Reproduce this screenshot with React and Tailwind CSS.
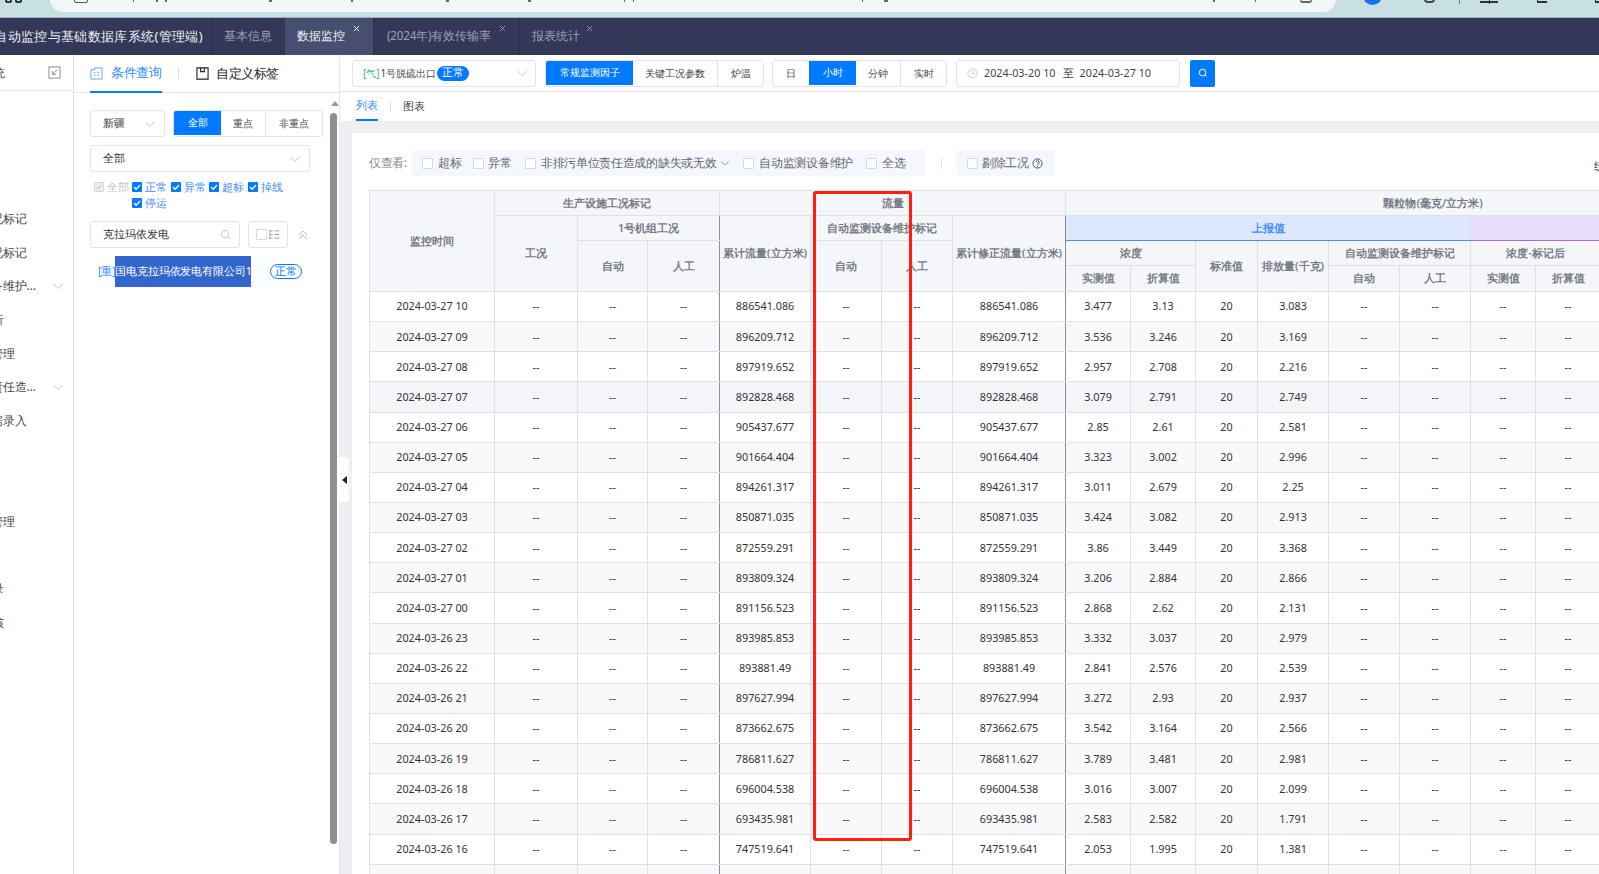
import React from "react";

const FONT = "font-['Liberation_Sans','Noto_Sans_CJK_SC',sans-serif]";

const rows = [
  ["2024-03-27 10","886541.086","3.477","3.13","3.083"],
  ["2024-03-27 09","896209.712","3.536","3.246","3.169"],
  ["2024-03-27 08","897919.652","2.957","2.708","2.216"],
  ["2024-03-27 07","892828.468","3.079","2.791","2.749"],
  ["2024-03-27 06","905437.677","2.85","2.61","2.581"],
  ["2024-03-27 05","901664.404","3.323","3.002","2.996"],
  ["2024-03-27 04","894261.317","3.011","2.679","2.25"],
  ["2024-03-27 03","850871.035","3.424","3.082","2.913"],
  ["2024-03-27 02","872559.291","3.86","3.449","3.368"],
  ["2024-03-27 01","893809.324","3.206","2.884","2.866"],
  ["2024-03-27 00","891156.523","2.868","2.62","2.131"],
  ["2024-03-26 23","893985.853","3.332","3.037","2.979"],
  ["2024-03-26 22","893881.49","2.841","2.576","2.539"],
  ["2024-03-26 21","897627.994","3.272","2.93","2.937"],
  ["2024-03-26 20","873662.675","3.542","3.164","2.566"],
  ["2024-03-26 19","786811.627","3.789","3.481","2.981"],
  ["2024-03-26 18","696004.538","3.016","3.007","2.099"],
  ["2024-03-26 17","693435.981","2.583","2.582","1.791"],
  ["2024-03-26 16","747519.641","2.053","1.995","1.381"],
  ["2024-03-26 15","741208.316","2.114","2.036","1.402"],
];

const colWidths = ["w-[125px]","w-[83px]","w-[70px]","w-[72px]","w-[91px]","w-[71px]","w-[71px]","w-[113px]","w-[65px]","w-[65px]","w-[62px]","w-[71px]","w-[71px]","w-[71px]","w-[65px]","w-[65px]","w-[62px]","w-[71px]","w-[67px]"];

const DARK = "border-r-[#8a8f9f]";

const urlMarks = [
  "left-[133px] w-[1px]",
  "left-[156px] w-[2px]",
  "left-[165px] w-[2px]",
  "left-[269px] w-[3px]",
  "left-[351px] w-[2px]",
  "left-[446px] w-[3px]",
  "left-[528px] w-[3px]",
  "left-[624px] w-[1px]",
  "left-[633px] w-[1px]",
  "left-[862px] w-[1px]",
  "left-[884px] w-[4px]",
  "left-[1213px] w-[2px]",
  "left-[1255px] w-[1px]",
];

function Th({ children, className = "", ...rest }) {
  return (
    <th {...rest} className={`border-r border-b border-[#dfe1e8] bg-[#f5f6fa] p-0 text-center text-[10.8px] font-semibold text-[#777b86] whitespace-nowrap overflow-hidden ${className}`}>
      {children}
    </th>
  );
}

function Td({ children, className = "" }) {
  return <td className={`border-r border-b border-[#dfe1e8] p-0 text-center text-[10.8px] text-[#333] whitespace-nowrap ${className}`}>{children}</td>;
}

function Chevron({ className = "" }) {
  return (
    <svg viewBox="0 0 12 12" className={`w-[12px] h-[12px] ${className}`} fill="none" stroke="#c0c4cc" strokeWidth="1">
      <path d="M1.5 4 L6 8.5 L10.5 4" />
    </svg>
  );
}

function Check({ checked, disabled, className = "" }) {
  if (!checked) return <span className={`inline-block w-[11px] h-[11px] border border-[#d5d8df] rounded-[1px] bg-white shrink-0 ${className}`} />;
  return (
    <span className={`inline-flex items-center justify-center w-[10px] h-[10px] rounded-[1px] shrink-0 ${disabled ? "bg-[#eceef2] border border-[#d5d8df]" : "bg-[#007aff]"} ${className}`}>
      <svg viewBox="0 0 10 10" className="w-[10px] h-[10px]" fill="none" stroke={disabled ? "#c0c4cc" : "#fff"} strokeWidth="1.3"><path d="M2 5 L4.2 7.2 L8 3" /></svg>
    </span>
  );
}

function Seg({ children, active, className = "" }) {
  return (
    <div className={`flex items-center justify-center h-full text-[10px] ${active ? "bg-[#007aff] text-white" : "text-[#444] border-r border-[#e1e3e8] last:border-r-0"} ${className}`}>
      {children}
    </div>
  );
}

function SideItem({ text, w, chevron }) {
  return (
    <div className="h-[33.7px] flex items-center">
      <div className={`${w} flex justify-end overflow-hidden whitespace-nowrap text-[12px] text-[#444]`}>{text}</div>
      {chevron && <Chevron className="ml-[16px]" />}
    </div>
  );
}

function CloseX({ className = "" }) {
  return (
    <svg viewBox="0 0 8 8" className={`absolute top-[7px] w-[7px] h-[7px] ${className}`} fill="none" strokeWidth="1">
      <path d="M1 1 L7 7 M7 1 L1 7" stroke="currentColor" />
    </svg>
  );
}

function Tag({ checked, label }) {
  return (
    <div className="flex items-center">
      <Check checked={checked} />
      <span className="ml-[3px] text-[#3b8cff] text-[11px]">{label}</span>
    </div>
  );
}

export default function App() {
  return (
    <div className={`${FONT} w-[1599px] h-[874px] overflow-hidden bg-white flex flex-col relative`}>
      {/* browser chrome */}
      <div className="h-[18px] shrink-0 bg-[#c8dfe3] border-b border-[#9fb4bb] relative overflow-hidden">
        <div className="absolute left-[50px] top-[-14px] w-[1286px] h-[26px] rounded-[14px] bg-[#f2f7f7]" />
        <div className="absolute left-[1363px] top-[-14px] w-[19px] h-[19px] rounded-full bg-[#1a73e8]" />
        <div className="absolute left-[5px] top-[-4px] w-[7px] h-[7px] rounded-[2px] border-2 border-[#333]" />
        <div className="absolute left-[15px] top-[-4px] w-[7px] h-[7px] rounded-[2px] border-2 border-[#333]" />
        <div className="absolute left-[74px] top-[-6px] w-[14px] h-[9px] rounded-[2px] border border-[#555]" />
        {urlMarks.map((m) => <div key={m} className={`absolute top-0 h-[2px] bg-[#666] ${m}`} />)}
        <div className="absolute left-[1300px] top-[-6px] w-[12px] h-[9px] border-b-2 border-x border-[#666] rounded-b-[3px]" />
        <div className="absolute left-[1424px] top-[-5px] w-[11px] h-[8px] rounded-full border-2 border-[#444]" />
        <div className="absolute left-[1459px] top-0 w-[1px] h-[4px] bg-[#777]" />
        <div className="absolute left-[1480px] top-[-3px] w-[18px] h-[6px] border-b-2 border-[#333]" />
        <div className="absolute left-[1489px] top-0 w-[1px] h-[4px] bg-[#333]" />
        <div className="absolute left-[1537px] top-[-3px] w-[10px] h-[6px] border-b-2 border-l border-[#333]" />
        <div className="absolute left-[1595px] top-[-3px] w-[4px] h-[6px] border-b-2 border-l border-[#333]" />
      </div>

      {/* title bar */}
      <div className="h-[37px] shrink-0 bg-[#343858] flex text-[11.7px] text-[#9ba0b5]">
        <div className="w-[212px] shrink-0 flex items-center justify-end pr-[8px] overflow-hidden whitespace-nowrap border-r border-[#2b2f4b] text-[13px] tracking-[0.35px] text-[#eef0f6]">
          自动监控与基础数据库系统(管理端)
        </div>
        <div className="w-[73px] shrink-0 flex items-center pl-[12px] pb-[2px]">基本信息</div>
        <div className="w-[88px] shrink-0 relative flex items-center pl-[12px] pb-[2px] bg-[#484e70] text-[#f0f2f8]">
          数据监控
          <CloseX className="left-[68px] text-white" />
        </div>
        <div className="w-[147px] shrink-0 relative flex items-center pl-[13px] pb-[2px] border-x border-[#2b2f4b] tracking-[-0.2px]">
          (2024年)有效传输率
          <CloseX className="left-[125px] text-[#9ba0b5]" />
        </div>
        <div className="w-[80px] shrink-0 relative flex items-center pl-[12px] pb-[2px]">
          报表统计
          <CloseX className="left-[66px] text-[#9ba0b5]" />
        </div>
      </div>

      <div className="flex-1 flex min-h-0">
        {/* nav */}
        <div className="w-[74px] shrink-0 border-r border-[#dfe1e8] flex flex-col">
          <div className="h-[36px] shrink-0 border-b border-[#e4e6eb] flex items-center justify-between pr-[12px]">
            <div className="w-[5px] flex justify-end overflow-hidden whitespace-nowrap text-[12px] text-[#444]">系统</div>
            <svg viewBox="0 0 14 14" className="w-[13px] h-[13px]" fill="none" stroke="#888" strokeWidth="1">
              <rect x="1" y="1" width="12" height="12" />
              <path d="M10 4 L5 9 M5 5.5 V9 H8.5" />
            </svg>
          </div>
          <div className="h-[111px] shrink-0" />
          <SideItem text="工况标记" w="w-[27px]" />
          <SideItem text="工况标记" w="w-[27px]" />
          <SideItem text="设备维护…" w="w-[36px]" chevron />
          <SideItem text="分析" w="w-[4px]" />
          <SideItem text="数据管理" w="w-[15px]" />
          <SideItem text="责任造…" w="w-[36px]" chevron />
          <SideItem text="数据录入" w="w-[27px]" />
          <SideItem text="" w="w-[27px]" />
          <SideItem text="" w="w-[27px]" />
          <SideItem text="数据管理" w="w-[15px]" />
          <SideItem text="" w="w-[27px]" />
          <SideItem text="记录" w="w-[4px]" />
          <SideItem text="审核" w="w-[4px]" />
        </div>

        {/* query panel */}
        <div className="w-[265px] shrink-0 flex flex-col relative">
          <div className="h-[38px] shrink-0 border-b border-[#e4e6eb] flex items-center pl-[16px] relative">
            <div className="w-[72px] h-[36px] flex items-center gap-[8px] border-b-[2px] border-[#007aff] text-[13px] tracking-[-0.4px] text-[#2f8cff] whitespace-nowrap box-content -mb-[1px]">
              <svg viewBox="0 0 14 14" className="w-[13px] h-[13px] shrink-0" fill="none" stroke="#5aa3f5" strokeWidth="1">
                <path d="M1 13 V3 H5 V1 H13 V13 Z M4 6 H6 M8 6 H10 M4 9 H6 M8 9 H10" />
              </svg>
              条件查询
            </div>
            <div className="w-px h-[13px] bg-[#dfe1e8] ml-[16px]" />
            <svg viewBox="0 0 14 14" className="w-[13px] h-[13px] ml-[17px]" fill="none" stroke="#222" strokeWidth="1.2">
              <path d="M1 1 H13 V13 H1 Z M5 1 V5 H9 V1" />
            </svg>
            <span className="ml-[7px] text-[13px] tracking-[-0.4px] text-[#222] whitespace-nowrap">自定义标签</span>
          </div>

          <div className="pl-[16px] pt-[17px] flex flex-col">
            <div className="flex h-[27px] w-[234px]">
              <div className="w-[75px] border border-[#e1e3e8] rounded-[3px] flex items-center justify-between pl-[12px] pr-[8px] text-[11px] text-[#333]">
                新疆<Chevron />
              </div>
              <div className="ml-[8px] w-[150px] flex border border-[#e1e3e8] rounded-[3px] overflow-hidden">
                <Seg active className="w-[47px] -my-px">全部</Seg>
                <Seg className="w-[45px]">重点</Seg>
                <Seg className="flex-1">非重点</Seg>
              </div>
            </div>
            <div className="mt-[8px] w-[220px] h-[27px] border border-[#e1e3e8] rounded-[3px] flex items-center justify-between pl-[12px] pr-[8px] text-[11px] text-[#333]">
              全部<Chevron />
            </div>
            <div className="mt-[7px] pl-[4px] flex items-center h-[16px]">
              <Check checked disabled />
              <span className="ml-[3px] text-[11px] text-[#c0c4cc] w-[25px]">全部</span>
              <div className="flex gap-[3.5px]">
                <Tag checked label="正常" />
                <Tag checked label="异常" />
                <Tag checked label="超标" />
                <Tag checked label="掉线" />
              </div>
            </div>
            <div className="pl-[42px] h-[16px] flex items-center"><Tag checked label="停运" /></div>
            <div className="mt-[10px] flex items-center h-[27px]">
              <div className="w-[150px] h-full border border-[#e1e3e8] rounded-[3px] flex items-center justify-between pl-[12px] pr-[8px] text-[11px] text-[#333]">
                克拉玛依发电
                <svg viewBox="0 0 12 12" className="w-[11px] h-[11px]" fill="none" stroke="#c0c4cc" strokeWidth="1"><circle cx="5.5" cy="5.5" r="4" /><path d="M8.5 8.5 L11 11" /></svg>
              </div>
              <div className="ml-[8px] w-[40px] h-full border border-[#e1e3e8] rounded-[3px] flex items-center justify-center gap-[2px]">
                <Check />
                <svg viewBox="0 0 12 12" className="w-[11px] h-[11px]" fill="none" stroke="#999" strokeWidth="1"><path d="M1 1 V11 M1 2 H4 M1 6 H4 M1 10 H4 M6 2 H11 M6 6 H11 M6 10 H11" /></svg>
              </div>
              <svg viewBox="0 0 12 12" className="ml-[9px] w-[12px] h-[12px]" fill="none" stroke="#c0c4cc" strokeWidth="1"><path d="M2 6 L6 2 L10 6 M2 10 L6 6 L10 10" /></svg>
            </div>
            <div className="mt-[8px] w-[214px] h-[31px] bg-linear-to-r from-white via-[#f4f8fd] to-white flex items-center pl-[8px] text-[10.8px]">
              <span className="relative z-10 text-[#2f8cff] w-[17px] whitespace-nowrap tracking-[-0.2px]">[重]</span>
              <span className="w-[136px] h-full flex items-center bg-[#3366cc] text-white whitespace-nowrap overflow-hidden tracking-[-0.1px]">国电克拉玛依发电有限公司1</span>
              <span className="ml-[19px] w-[32px] h-[15px] flex items-center justify-center rounded-full border border-[#007aff] text-[#007aff] text-[10.5px]">正常</span>
            </div>
          </div>

          {/* scrollbar */}
          <div className="absolute top-[46px] left-[257px] w-0 h-0 border-x-[4px] border-x-transparent border-b-[5px] border-b-[#999]" />
          <div className="absolute top-[58px] left-[256px] w-[7px] h-[731px] rounded-[4px] bg-[#8f8f8f]" />
        </div>

        {/* main */}
        <div className="flex-1 min-w-0 flex flex-col border-l border-[#e4e6eb] relative">
          <div className="h-[37px] shrink-0 border-b border-[#e4e6eb] flex items-center pl-[12px]">
            <div className="w-[184px] h-[27px] border border-[#e1e3e8] rounded-[3px] flex items-center pl-[10px] pr-[7px] text-[10px] text-[#444] whitespace-nowrap">
              <span className="text-[#3cb8a0]">[气]</span>
              <span className="ml-[1px]">1号脱硫出口</span>
              <span className="ml-[1px] w-[32px] h-[15px] rounded-full bg-[#007aff] text-white text-[10.5px] flex items-center justify-center">正常</span>
              <Chevron className="ml-auto" />
            </div>
            <div className="ml-[9px] w-[219px] h-[27px] flex border border-[#e1e3e8] rounded-[3px] overflow-hidden">
              <Seg active className="w-[87px] -my-px">常规监测因子</Seg>
              <Seg className="w-[85px]">关键工况参数</Seg>
              <Seg className="flex-1">炉温</Seg>
            </div>
            <div className="ml-[8px] w-[175px] h-[27px] flex border border-[#e1e3e8] rounded-[3px] overflow-hidden">
              <Seg className="w-[36px] border-r-0">日</Seg>
              <Seg active className="w-[47px] -my-px">小时</Seg>
              <Seg className="w-[45px]">分钟</Seg>
              <Seg className="flex-1">实时</Seg>
            </div>
            <div className="ml-[9px] w-[224px] h-[27px] border border-[#e1e3e8] rounded-[3px] flex items-center pl-[10px] text-[10.8px] text-[#444] whitespace-nowrap">
              <svg viewBox="0 0 12 12" className="w-[11px] h-[11px]" fill="none" stroke="#c0c4cc" strokeWidth="1"><circle cx="6" cy="6" r="5" /><path d="M6 3 V6 H8.5" /></svg>
              <span className="ml-[6px]">2024-03-20 10</span>
              <span className="ml-[7px]">至</span>
              <span className="ml-[6px]">2024-03-27 10</span>
            </div>
            <div className="ml-[10px] w-[25px] h-[27px] rounded-[2px] bg-[#007aff] flex items-center justify-center">
              <svg viewBox="0 0 12 12" className="w-[10px] h-[10px]" fill="none" stroke="#fff" strokeWidth="1.2"><circle cx="5.5" cy="5.5" r="4" /><path d="M8.5 8.5 L10.5 10.5" /></svg>
            </div>
          </div>
          <div className="h-[29px] shrink-0 flex items-center pl-[16px] text-[11px] text-[#444] whitespace-nowrap">
            <div className="w-[22px] h-[29px] flex items-center justify-center text-[#2f8cff] border-b-[2px] border-[#007aff]">列表</div>
            <div className="w-px h-[11px] bg-[#dfe1e8] ml-[12px]" />
            <div className="ml-[12px]">图表</div>
          </div>

          <div className="flex-1 min-h-0 bg-[#eeeff3] pl-[12px] pt-[12px]">
            <div className="h-full bg-white pl-[17px] pt-[17px] overflow-hidden relative">
              <div className="flex items-center h-[26px] text-[11.7px] tracking-[-0.3px] text-[#666]">
                <span className="w-[43px] text-[#888] whitespace-nowrap">仅查看:</span>
                <div className="w-[513px] h-full bg-[#f4f7fd] rounded-[3px] flex items-center pl-[10px] whitespace-nowrap">
                  <Check /><span className="ml-[5px]">超标</span>
                  <Check className="ml-[12px]" /><span className="ml-[4px]">异常</span>
                  <Check className="ml-[13px]" /><span className="ml-[5px]">非排污单位责任造成的缺失或无效</span>
                  <svg viewBox="0 0 12 12" className="w-[10px] h-[10px] ml-[4px]" fill="none" stroke="#888" strokeWidth="1"><path d="M1.5 4 L6 8.5 L10.5 4" /></svg>
                  <Check className="ml-[13px]" /><span className="ml-[5px]">自动监测设备维护</span>
                  <Check className="ml-[13px]" /><span className="ml-[5px]">全选</span>
                </div>
                <div className="w-px h-[11px] bg-[#dfe1e8] ml-[16px]" />
                <div className="ml-[15px] w-[98px] h-full bg-[#f4f7fd] rounded-[3px] flex items-center pl-[10px] whitespace-nowrap">
                  <Check /><span className="ml-[4px]">剔除工况</span>
                  <svg viewBox="0 0 12 12" className="w-[11px] h-[11px] ml-[3px]" fill="none" stroke="#444" strokeWidth="1"><circle cx="6" cy="6" r="5" /><path d="M4.3 4.6 A1.8 1.8 0 1 1 6 6.6 V7.4 M6 8.6 V9.6" /></svg>
                </div>
              </div>

              <table className="mt-[14px] table-fixed border-collapse border-t border-l border-[#dfe1e8] w-[1431px]">
                <colgroup>
                  {colWidths.map((w, i) => <col key={i} className={w} />)}
                </colgroup>
                <thead>
                  <tr className="h-[25px]">
                    <Th rowSpan={4}>监控时间</Th>
                    <Th colSpan={3}>生产设施工况标记</Th>
                    <Th colSpan={4}>流量</Th>
                    <Th colSpan={11}>颗粒物(毫克/立方米)</Th>
                  </tr>
                  <tr className="h-[25px]">
                    <Th rowSpan={3}>工况</Th>
                    <Th colSpan={2} className={DARK}>1号机组工况</Th>
                    <Th rowSpan={3}>累计流量(立方米)</Th>
                    <Th colSpan={2}>自动监测设备维护标记</Th>
                    <Th rowSpan={3} className={DARK}>累计修正流量(立方米)</Th>
                    <Th colSpan={6} className="!bg-[#dce8fd] !text-[#3f8cff] !border-b-[#4a8ef0]">上报值</Th>
                    <Th colSpan={5} className="!bg-[#eadffb] !border-b-[#a868e8]"> </Th>
                  </tr>
                  <tr className="h-[25px]">
                    <Th rowSpan={2}>自动</Th>
                    <Th rowSpan={2} className={DARK}>人工</Th>
                    <Th rowSpan={2}>自动</Th>
                    <Th rowSpan={2}>人工</Th>
                    <Th colSpan={2}>浓度</Th>
                    <Th rowSpan={2}>标准值</Th>
                    <Th rowSpan={2}>排放量(千克)</Th>
                    <Th colSpan={2}>自动监测设备维护标记</Th>
                    <Th colSpan={2}>浓度-标记后</Th>
                    <Th rowSpan={2}>标准值</Th>
                    <Th rowSpan={2}>排放量(千克)</Th>
                    <Th rowSpan={2}> </Th>
                  </tr>
                  <tr className="h-[26px]">
                    <Th>实测值</Th>
                    <Th>折算值</Th>
                    <Th>自动</Th>
                    <Th>人工</Th>
                    <Th>实测值</Th>
                    <Th>折算值</Th>
                  </tr>
                </thead>
                <tbody>
                  {rows.map((r, i) => (
                    <tr key={r[0]} className={`h-[30.15px] ${i === 3 ? "bg-[#f4f5f9]" : i % 2 ? "bg-[#f9f9fb]" : "bg-white"}`}>
                      <Td className="text-[#222]">{r[0]}</Td>
                      <Td>--</Td><Td>--</Td><Td className={DARK}>--</Td>
                      <Td>{r[1]}</Td>
                      <Td>--</Td><Td>--</Td>
                      <Td className={DARK}>{r[1]}</Td>
                      <Td>{r[2]}</Td>
                      <Td>{r[3]}</Td>
                      <Td>20</Td>
                      <Td>{r[4]}</Td>
                      <Td>--</Td><Td>--</Td><Td>--</Td><Td>--</Td><Td>--</Td><Td>--</Td><Td>--</Td>
                    </tr>
                  ))}
                </tbody>
              </table>
              <div className="absolute right-0 top-[25px] w-[5px] overflow-hidden text-[11px] text-[#333] whitespace-nowrap">统计</div>
            </div>
          </div>

          {/* collapse handle */}
          <div className="absolute -left-px top-[402px] w-[10px] h-[45px] bg-white rounded-r-[4px] flex items-center justify-center">
            <div className="w-0 h-0 border-y-[4px] border-y-transparent border-r-[5px] border-r-[#222]" />
          </div>
        </div>
      </div>

      {/* red annotation rectangle */}
      <div className="absolute left-[813px] top-[191px] w-[99px] h-[650px] border-[3.5px] border-[#ff1f0f] rounded-[3px] pointer-events-none" />
    </div>
  );
}
